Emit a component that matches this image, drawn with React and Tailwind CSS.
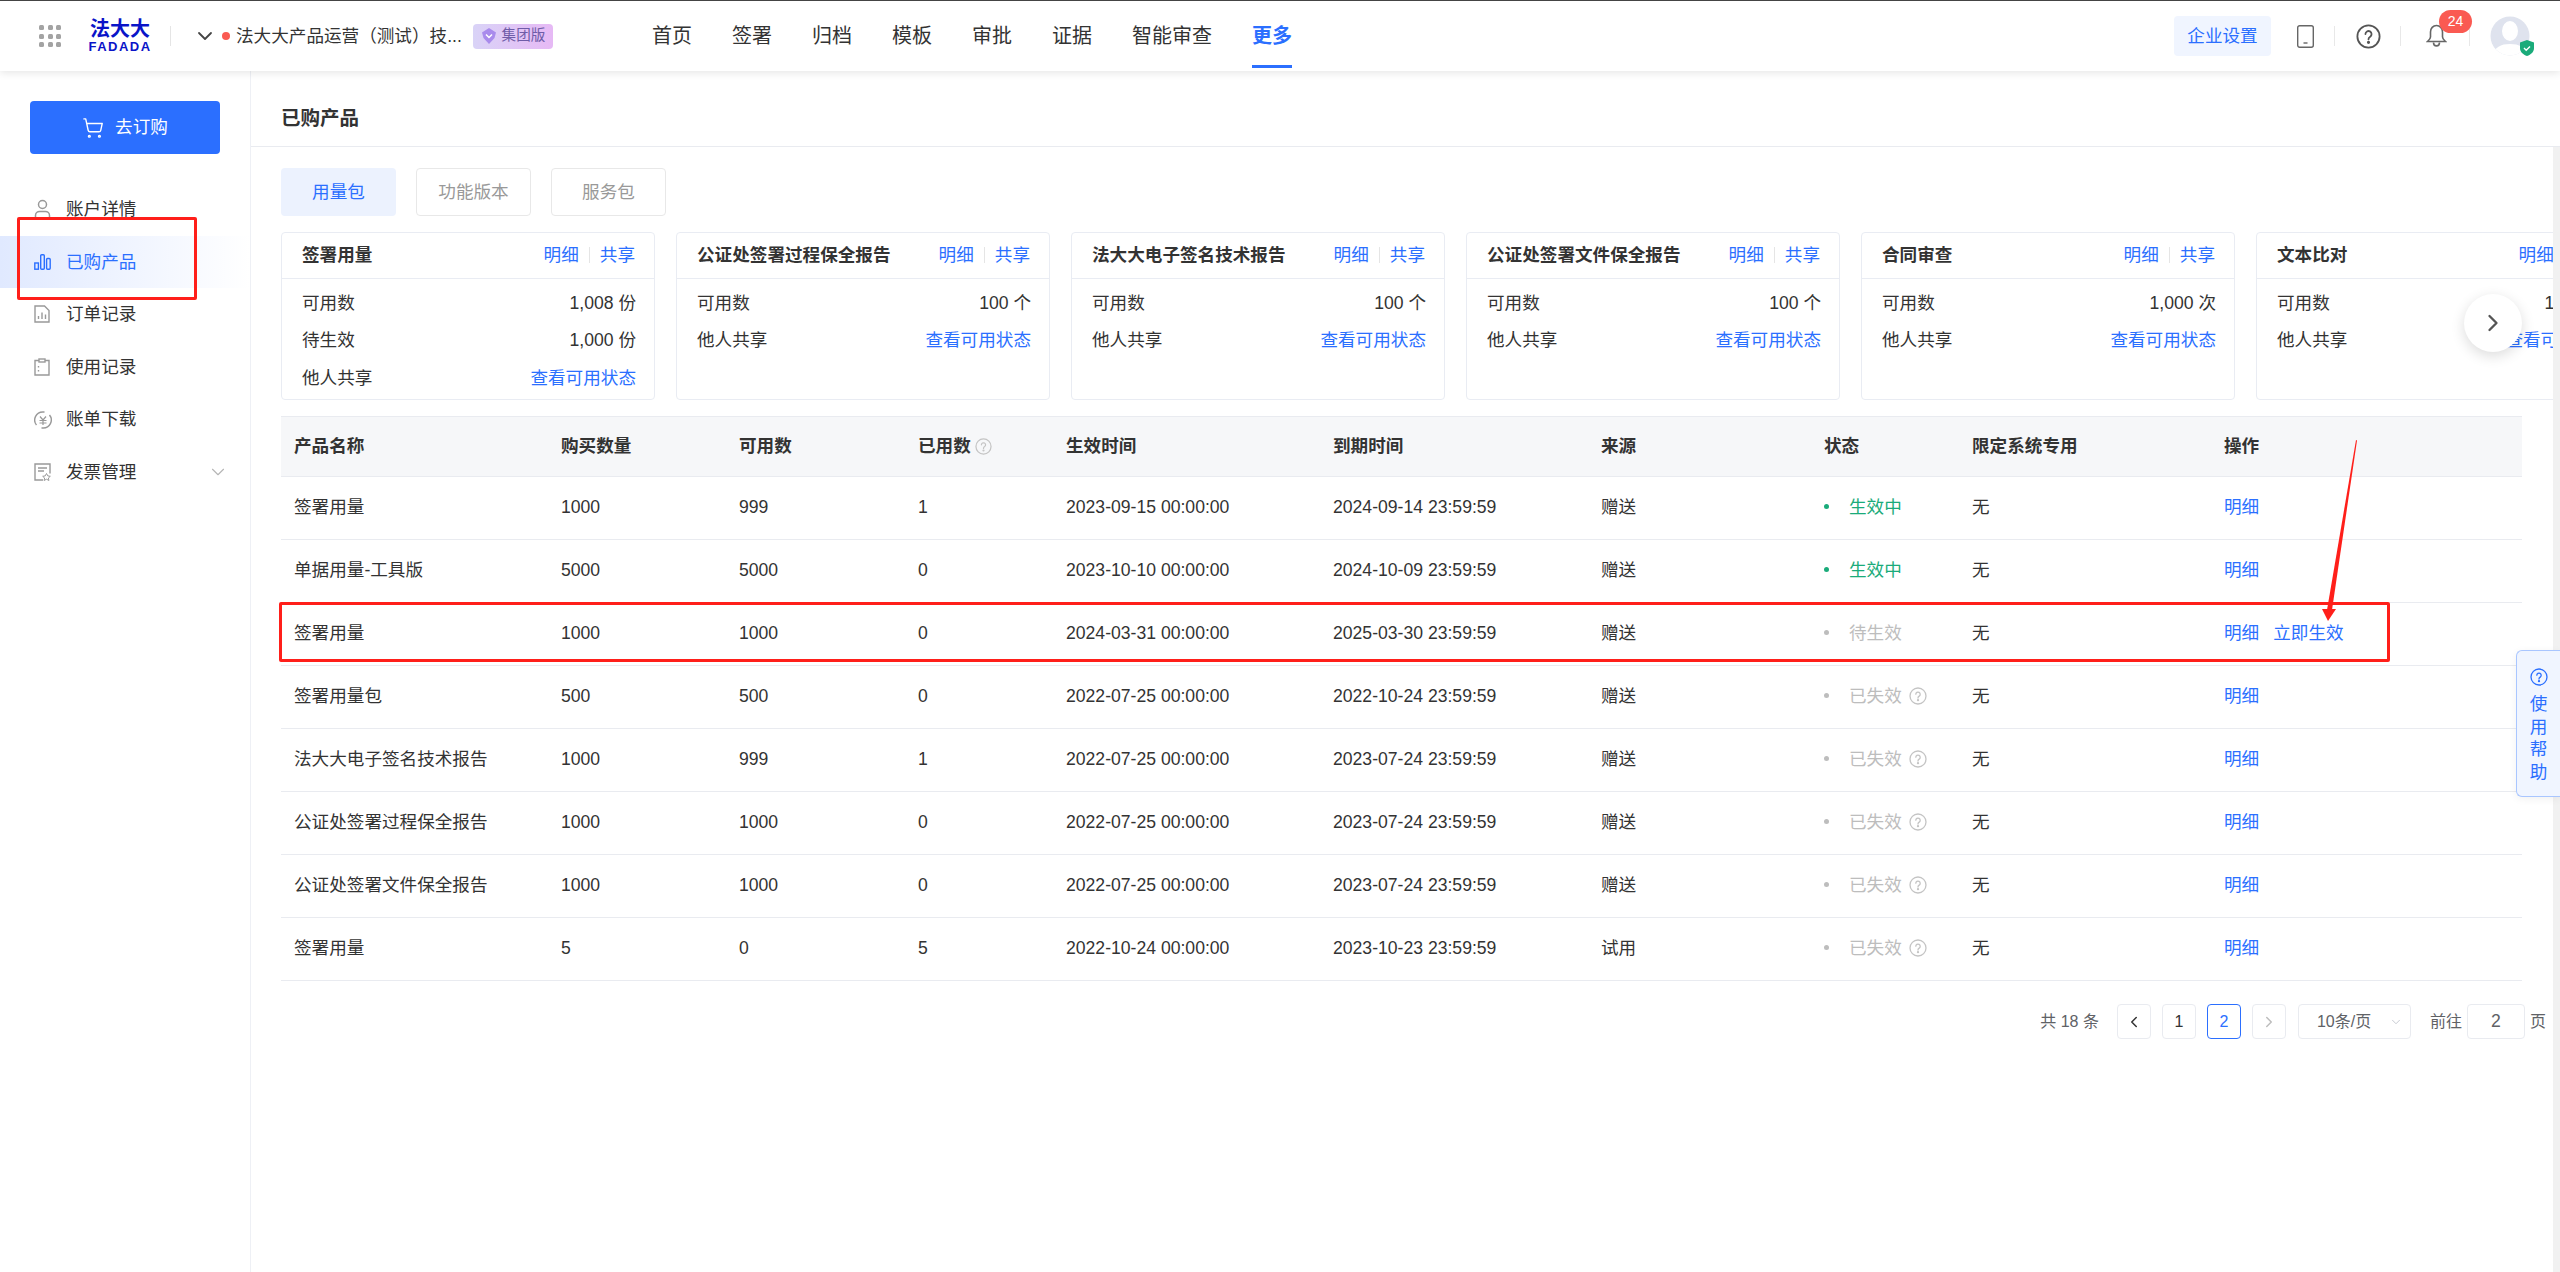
import React from 'react';
import { ChevronDown, ChevronLeft, ChevronRight, ShoppingCart } from 'lucide-react';

const navItems = ['首页', '签署', '归档', '模板', '审批', '证据', '智能审查'];

const cards = [
    { title: '签署用量', rows: [['可用数', '1,008 份'], ['待生效', '1,000 份']] },
    { title: '公证处签署过程保全报告', rows: [['可用数', '100 个']] },
    { title: '法大大电子签名技术报告', rows: [['可用数', '100 个']] },
    { title: '公证处签署文件保全报告', rows: [['可用数', '100 个']] },
    { title: '合同审查', rows: [['可用数', '1,000 次']] },
    { title: '文本比对', rows: [['可用数', '1,000 次']] },
];

const rows = [
    ['签署用量', '1000', '999', '1', '2023-09-15 00:00:00', '2024-09-14 23:59:59', '赠送', 'on'],
    ['单据用量-工具版', '5000', '5000', '0', '2023-10-10 00:00:00', '2024-10-09 23:59:59', '赠送', 'on'],
    ['签署用量', '1000', '1000', '0', '2024-03-31 00:00:00', '2025-03-30 23:59:59', '赠送', 'wait'],
    ['签署用量包', '500', '500', '0', '2022-07-25 00:00:00', '2022-10-24 23:59:59', '赠送', 'off'],
    ['法大大电子签名技术报告', '1000', '999', '1', '2022-07-25 00:00:00', '2023-07-24 23:59:59', '赠送', 'off'],
    ['公证处签署过程保全报告', '1000', '1000', '0', '2022-07-25 00:00:00', '2023-07-24 23:59:59', '赠送', 'off'],
    ['公证处签署文件保全报告', '1000', '1000', '0', '2022-07-25 00:00:00', '2023-07-24 23:59:59', '赠送', 'off'],
    ['签署用量', '5', '0', '5', '2022-10-24 00:00:00', '2023-10-23 23:59:59', '试用', 'off'],
];

const columns = [267, 178, 179, 148, 267, 268, 223, 148, 252, 311];
const headers = ['产品名称', '购买数量', '可用数', '已用数', '生效时间', '到期时间', '来源', '状态', '限定系统专用', '操作'];

const HelpIcon = ({ size = 18, color = '#c4c4c4' }) => (
    <svg width={size} height={size} viewBox="0 0 18 18" fill="none" stroke={color} strokeWidth="1.3">
        <circle cx="9" cy="9" r="8" />
        <path d="M6.8 7.2a2.2 2.2 0 1 1 3.4 1.9c-.8.5-1.2 1-1.2 1.9" strokeLinecap="round" />
        <circle cx="9" cy="13.2" r=".5" fill={color} />
    </svg>
);

const sideIcons = {
    user: (
        <svg width="17" height="20" viewBox="0 0 17 20" fill="none" stroke="#999" strokeWidth="1.5">
            <circle cx="8.5" cy="5.5" r="4" />
            <path d="M1.5 19v-2.5c0-2.5 2-4 4-4h6c2 0 4 1.500 4 4V19z" />
        </svg>
    ),
    chart: (
        <svg width="17" height="16" viewBox="0 0 17 16" fill="none" stroke="#2b6fff" strokeWidth="1.4">
            <rect x=".8" y="9" width="3.6" height="6.200" />
            <rect x="6.700" y=".8" width="3.600" height="14.400" rx="1" />
            <rect x="12.600" y="4.500" width="3.600" height="10.700" rx="1" />
        </svg>
    ),
    order: (
        <svg width="16" height="18" viewBox="0 0 16 18" fill="none" stroke="#999" strokeWidth="1.4">
            <path d="M1 1h9.500L15 5.500V17H1z" />
            <path d="M4.500 14v-3M8 14V7.500M11.500 14v-4.500" />
        </svg>
    ),
    usage: (
        <svg width="16" height="18" viewBox="0 0 16 18" fill="none" stroke="#999" strokeWidth="1.4">
            <path d="M5 2.500H1V17h14V2.500h-4" />
            <rect x="5" y="1" width="6" height="3" />
            <path d="M4.500 8v1.500M4.500 12v1.500" />
        </svg>
    ),
    bill: (
        <svg width="18" height="18" viewBox="0 0 18 18" fill="none" stroke="#999" strokeWidth="1.4">
            <path d="M2.500 14A8 8 0 0 1 9 1h1.500M15.500 4A8 8 0 0 1 9 17H7.500" />
            <path d="M6 5.500 9 9l3-3.500M5.500 9.500h7M5.500 12h7M9 9v5" strokeWidth="1.200" />
        </svg>
    ),
    invoice: (
        <svg width="17" height="18" viewBox="0 0 17 18" fill="none" stroke="#999" strokeWidth="1.400">
            <path d="M9 17H1V1h15v9.500" />
            <path d="M4 5h9M4 8h6" />
            <path d="m12.500 10.500 1.300 2.400 2.500.4-1.900 1.700.5 2.500-2.400-1.300-2.400 1.300.5-2.500-1.900-1.700 2.500-.4z" strokeWidth="1" />
        </svg>
    ),
};

const sideItems = [
    { key: 'user', label: '账户详情' },
    { key: 'chart', label: '已购产品', active: true },
    { key: 'order', label: '订单记录' },
    { key: 'usage', label: '使用记录' },
    { key: 'bill', label: '账单下载' },
    { key: 'invoice', label: '发票管理', arrow: true },
];

const Header = () => (
    <header className="relative z-10 flex h-[70px] shrink-0 items-center bg-white pl-[39px] pr-[30px] shadow-[0_2px_8px_rgba(0,0,0,0.1)]">
        {/* app launcher dots */}
        <div className="grid w-[22px] grid-cols-3 gap-[3.500px]">
            {Array.from({ length: 9 }).map((_, i) => (
                <span key={i} className="h-[5px] w-[5px] rounded-[1.500px] bg-[#a3a3a3]"></span>
            ))}
        </div>
        <div className="ml-[29px] flex w-[60px] flex-col items-center text-[#0a14c8]">
            <span className="text-[20px] font-bold leading-[18px]">法大大</span>
            <span className="mt-[3px] text-[13px] font-bold leading-[11px] tracking-[1.500px]">FADADA</span>
        </div>
        <span className="ml-[20px] h-[20px] w-px bg-[#e5e5e5]"></span>
        <ChevronDown className="ml-[22px] h-[24px] w-[24px] text-[#444]" strokeWidth={1.800} />
        <span className="ml-[5px] h-[8px] w-[8px] rounded-full bg-[#fa5a52]"></span>
        <span className="ml-[6px] w-[224px] whitespace-nowrap text-[17.600px] text-[#333]">法大大产品运营（测试）技...</span>
        <span className="ml-[13px] flex h-[25px] w-[80px] items-center justify-center gap-[5px] rounded-[4px] bg-gradient-to-r from-[#d9d3f7] to-[#e6b9f5] text-[14.600px] text-[#6f5ca8]">
            <svg width="16" height="18" viewBox="0 0 16 18">
                <path d="M8 1 15 5.500 13.500 11 8 17 2.500 11 1 5.500z" fill="#a98bec" />
                <path d="m5 7.500 3 3 3-3" fill="none" stroke="#fff" strokeWidth="1.500" />
            </svg>
            集团版
        </span>

        <nav className="ml-[99px] flex gap-[40px] text-[20px] text-[#333]">
            {navItems.map((item) => (
                <span key={item}>{item}</span>
            ))}
            <span className="relative font-bold text-[#2b6fff]">
                更多
                <span className="absolute bottom-[-17px] left-0 h-[3px] w-full bg-[#2b6fff]"></span>
            </span>
        </nav>

        <div className="ml-auto flex items-center">
            <span className="flex h-[40px] w-[97px] items-center justify-center rounded-[4px] bg-[#f0f5ff] text-[17.600px] text-[#2b6fff]">企业设置</span>
            <svg className="ml-[26px]" width="17" height="23" viewBox="0 0 17 23" fill="none" stroke="#666" strokeWidth="1.400">
                <rect x=".7" y=".7" width="15.600" height="21.600" rx="2" />
                <path d="M6.500 18h4" />
            </svg>
            <span className="ml-[20px] h-[20px] w-px bg-[#e8e8e8]"></span>
            <span className="ml-[21px]"><HelpIcon size={25} color="#555" /></span>
            <span className="ml-[19px] h-[20px] w-px bg-[#e8e8e8]"></span>
            <span className="relative ml-[25px] flex">
                <svg width="21" height="24" viewBox="0 0 21 24" fill="none" stroke="#666" strokeWidth="1.600">
                    <path d="M10.500 1.500c-3.500 0-6 2.800-6 6.500v5c0 1.500-1.200 3-3 4.500h18c-1.800-1.500-3-3-3-4.500V8c0-3.700-2.500-6.500-6-6.500z" />
                    <path d="M7.500 18.500c0 4.500 6 4.500 6 0" />
                </svg>
                <span className="absolute left-[13px] top-[-14px] flex h-[23px] w-[33px] items-center justify-center rounded-full bg-[#fa5a52] text-[14px] text-white">24</span>
            </span>
            <span className="ml-[22px] h-[20px] w-px bg-[#e8e8e8]"></span>
            <span className="relative ml-[20px] flex">
                <svg width="40" height="40" viewBox="0 0 40 40">
                    <defs>
                        <clipPath id="avatarClip"><circle cx="20" cy="20" r="19.500" /></clipPath>
                    </defs>
                    <circle cx="20" cy="20" r="19.500" fill="#dfe3ee" />
                    <g clipPath="url(#avatarClip)" fill="#fff">
                        <ellipse cx="20" cy="15" rx="8" ry="10" />
                        <path d="M3 40c1-9 8-12 17-12s16 3 17 12z" />
                    </g>
                </svg>
                <svg className="absolute left-[30px] top-[24px]" width="14" height="16" viewBox="0 0 14 16">
                    <path d="M7 0 14 2.500V8c0 4-3 6.500-7 8-4-1.500-7-4-7-8V2.500z" fill="#1aab7a" />
                    <path d="m4 8 2.200 2.200L10 6.500" fill="none" stroke="#fff" strokeWidth="1.400" />
                </svg>
            </span>
        </div>
    </header>
);

const Sidebar = () => (
    <aside className="w-[251px] shrink-0 border-r border-[#eef0f5] bg-white">
        <div className="mt-[30px] ml-[30px] flex h-[53px] w-[190px] items-center justify-center gap-[11px] rounded-[4px] bg-[#2b6fff] text-[17.600px] text-white">
            <ShoppingCart className="h-[22px] w-[22px]" strokeWidth={1.500} />
            去订购
        </div>
        <ul className="mt-[29px]">
            {sideItems.map((item) => (
                <li
                    key={item.key}
                    className={`flex h-[52.600px] items-center text-[17.600px] ${item.active ? 'bg-gradient-to-r from-[#e0e9ff] to-[#ffffff] text-[#2b6fff]' : 'text-[#333]'}`}
                >
                    <span className="ml-[34px] flex w-[32px] items-center">{sideIcons[item.key]}</span>
                    {item.label}
                    {item.arrow && <ChevronDown className="ml-[71px] h-[22px] w-[22px] text-[#b5b5b5]" strokeWidth={1.200} />}
                </li>
            ))}
        </ul>
    </aside>
);

const UsageCard = ({ card }) => (
    <div className="h-[168px] w-[374px] shrink-0 rounded-[4px] border border-[#e9ecf3] text-[17.600px] text-[#333]">
        <div className="flex h-[46px] items-center justify-between border-b border-[#e9ecf3] pl-[20px] pr-[19px]">
            <span className="whitespace-nowrap font-bold">{card.title}</span>
            <span className="flex items-center text-[#2b6fff]">
                明细
                <span className="mx-[10px] h-[16px] w-px bg-[#e5e5e5]"></span>
                共享
            </span>
        </div>
        <div className="pl-[20px] pr-[18px] pt-[5px]">
            {card.rows.map(([label, value]) => (
                <div key={label} className="flex h-[37.500px] items-center justify-between">
                    <span>{label}</span>
                    <span>{value}</span>
                </div>
            ))}
            <div className="flex h-[37.500px] items-center justify-between">
                <span>他人共享</span>
                <span className="text-[#2b6fff]">查看可用状态</span>
            </div>
        </div>
    </div>
);

const Status = ({ value }) => {
    if (value === 'on') {
        return (
            <span className="flex items-center text-[#1aab7a]">
                <span className="mr-[20px] h-[5px] w-[5px] rounded-full bg-[#1aab7a]"></span>
                生效中
            </span>
        );
    }
    return (
        <span className="flex items-center text-[#bdbdbd]">
            <span className="mr-[20px] h-[5px] w-[5px] rounded-full bg-[#bdbdbd]"></span>
            {value === 'wait' ? '待生效' : '已失效'}
            {value === 'off' && <span className="ml-[7px] flex"><HelpIcon /></span>}
        </span>
    );
};

const ProductTable = () => (
    <table className="mt-[16px] w-[2241px] table-fixed border-collapse text-left text-[17.600px] text-[#333]">
        <colgroup>
            {columns.map((w, i) => (
                <col key={i} width={w} />
            ))}
        </colgroup>
        <thead>
            <tr className="h-[60px] border-y border-[#e9ebf0] bg-[#f6f7f9]">
                {headers.map((h) => (
                    <th key={h} className="pl-[13px] font-bold">
                        <span className="flex items-center gap-[4px]">
                            {h}
                            {h === '已用数' && <HelpIcon size={17} />}
                        </span>
                    </th>
                ))}
            </tr>
        </thead>
        <tbody>
            {rows.map((row, i) => (
                <tr key={i} className="h-[63px] border-b border-[#e9ebf0]">
                    {row.slice(0, 7).map((cell, j) => (
                        <td key={j} className="whitespace-nowrap pb-[2px] pl-[13px]">{cell}</td>
                    ))}
                    <td className="pb-[2px] pl-[13px]"><Status value={row[7]} /></td>
                    <td className="pb-[2px] pl-[13px]">无</td>
                    <td className="pb-[2px] pl-[13px] text-[#2b6fff]">
                        <span className="flex gap-[14px]">
                            明细
                            {row[7] === 'wait' && <span>立即生效</span>}
                        </span>
                    </td>
                </tr>
            ))}
        </tbody>
    </table>
);

const PageBtn = ({ children, className = '' }) => (
    <span className={`flex h-[35px] w-[34px] items-center justify-center rounded-[4px] border ${className}`}>{children}</span>
);

const Pagination = () => (
    <div className="mt-[23px] flex h-[35px] w-[2265px] items-center justify-end text-[16px] text-[#606266]">
        <span className="mr-[18px] whitespace-nowrap">共 18 条</span>
        <PageBtn className="border-[#e9ebf0] text-[#333]"><ChevronLeft className="h-[18px] w-[18px]" strokeWidth={2} /></PageBtn>
        <PageBtn className="ml-[11px] border-[#e9ebf0] text-[#333]">1</PageBtn>
        <PageBtn className="ml-[11px] border-[#2b6fff] text-[#2b6fff]">2</PageBtn>
        <PageBtn className="ml-[11px] border-[#e9ebf0] text-[#bdbdbd]"><ChevronRight className="h-[18px] w-[18px]" strokeWidth={2} /></PageBtn>
        <span className="ml-[12px] flex h-[35px] w-[113px] items-center rounded-[4px] border border-[#e9ebf0] pl-[18px]">
            10条/页
            <ChevronDown className="ml-[18px] h-[14px] w-[14px] text-[#c0c4cc]" strokeWidth={1.500} />
        </span>
        <span className="ml-[19px]">前往</span>
        <span className="ml-[5px] flex h-[35px] w-[58px] items-center justify-center rounded-[4px] border border-[#e9ebf0] text-[17.600px]">2</span>
        <span className="ml-[5px]">页</span>
    </div>
);

const App = () => {
    return (
        <div className="relative flex h-screen w-full flex-col overflow-hidden border-t border-[#444] bg-white [font-family:'Liberation_Sans','Noto_Sans_CJK_SC',sans-serif]">
            <Header />
            <div className="flex min-h-0 flex-1">
                <Sidebar />
                <main className="relative min-w-0 flex-1">
                    <div className="flex h-[76px] items-center border-b border-[#e9ebf0] pl-[30px] pt-[21px] text-[19.500px] font-bold text-[#333]">已购产品</div>
                    <div className="flex h-full">
                        <div className="min-w-0 flex-1 pl-[30px] pt-[21px]">
                            <div className="flex gap-[20px] text-[17.600px]">
                                <span className="flex h-[48px] w-[115px] items-center justify-center rounded-[4px] bg-[#ecf2fe] text-[#2b6fff]">用量包</span>
                                <span className="flex h-[48px] w-[115px] items-center justify-center rounded-[4px] border border-[#e8e8e8] text-[#999]">功能版本</span>
                                <span className="flex h-[48px] w-[115px] items-center justify-center rounded-[4px] border border-[#e8e8e8] text-[#999]">服务包</span>
                            </div>
                            <div className="relative mt-[16px]">
                                <div className="flex gap-[21px] overflow-hidden">
                                    {cards.map((card) => (
                                        <UsageCard key={card.title} card={card} />
                                    ))}
                                </div>
                                <span className="absolute left-[2183px] top-[62px] flex h-[58px] w-[58px] items-center justify-center rounded-full bg-white shadow-[0_4px_14px_rgba(0,0,0,0.14)]">
                                    <ChevronRight className="h-[28px] w-[28px] text-[#555]" strokeWidth={2} />
                                </span>
                            </div>
                            <ProductTable />
                            <Pagination />
                        </div>
                        <div className="w-[7px] shrink-0 bg-[#f1f1f1]"></div>
                    </div>
                </main>
            </div>

            {/* help tab on the right edge */}
            <div className="absolute left-[2516px] top-[649px] flex h-[147px] w-[44px] flex-col items-center rounded-l-[6px] border border-r-0 border-[#a9c6ff] bg-[#f0f5ff] pt-[17px] text-[17.600px] leading-[22.500px] text-[#2b6fff] shadow-[0_2px_8px_rgba(0,0,0,0.06)]">
                <HelpIcon size={18} color="#2b6fff" />
                <span className="mt-[7px]">使</span>
                <span>用</span>
                <span>帮</span>
                <span>助</span>
            </div>

            {/* red annotations drawn over the screenshot */}
            <div className="absolute left-[17px] top-[216px] h-[83px] w-[180px] rounded-[2px] border-[3px] border-[#ff1f1a]"></div>
            <div className="absolute left-[279px] top-[601px] h-[60px] w-[2111px] rounded-[2px] border-[3px] border-[#ff1f1a]"></div>
            <svg className="absolute left-[2316px] top-[432px]" width="48" height="192" viewBox="0 0 48 192" fill="#ff1f1a">
                <path d="M40 7 41 7.500 16 177 11 177z" />
                <path d="M6 176 20 176 12 188z" />
            </svg>
        </div>
    );
};

export default App;
